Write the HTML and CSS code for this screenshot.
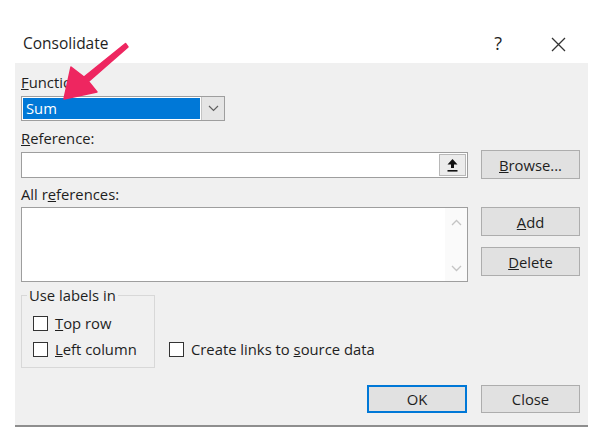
FILE: index.html
```html
<!DOCTYPE html>
<html lang="en">
<head>
  <meta charset="UTF-8" />
  <title>Consolidate</title>
  <link rel="stylesheet" href="styles.css">
</head>
<body>
  <div class="window">
    <div class="titlebar">
      <span class="title">Consolidate</span>
      <span class="help">?</span>
      <span class="close">
        <svg width="15" height="15" viewBox="0 0 15 15"><path d="M1 1 L14 14 M14 1 L1 14" stroke="#333" stroke-width="1.3" fill="none"/></svg>
      </span>
    </div>

    <div class="panel">
      <label class="field-label"><u>F</u>unction:</label>
      <div class="combo">
        <div class="combo-value"><span class="selected">Sum</span></div>
        <div class="combo-btn">
          <svg width="11" height="7" viewBox="0 0 11 7"><path d="M1 1 L5.5 5.5 L10 1" stroke="#606060" stroke-width="1.2" fill="none"/></svg>
        </div>
      </div>

      <label class="field-label ref-label"><u>R</u>eference:</label>
      <div class="row">
        <div class="textbox ref-box">
          <span class="ref-btn">
            <svg width="11" height="13" viewBox="0 0 11 13"><path d="M5.5 0 L0.5 5.5 L4 5.5 L4 9 L7 9 L7 5.5 L10.5 5.5 Z" fill="#111"/><rect x="0.5" y="11" width="10" height="1.6" fill="#111"/></svg>
          </span>
        </div>
        <button class="btn"><u>B</u>rowse...</button>
      </div>

      <label class="field-label refs-label">All r<u>e</u>ferences:</label>
      <div class="row list-row">
        <div class="textbox list-box">
          <div class="scroll">
            <svg width="11" height="7" viewBox="0 0 11 7"><path d="M1 6 L5.5 1.5 L10 6" stroke="#c4c4c4" stroke-width="1.3" fill="none"/></svg>
            <svg width="11" height="7" viewBox="0 0 11 7"><path d="M1 1 L5.5 5.5 L10 1" stroke="#c4c4c4" stroke-width="1.3" fill="none"/></svg>
          </div>
        </div>
        <div class="btn-col">
          <button class="btn"><u>A</u>dd</button>
          <button class="btn"><u>D</u>elete</button>
        </div>
      </div>

      <div class="options">
        <fieldset class="group">
          <legend>Use labels in</legend>
          <label class="check"><span class="box"></span><span><u>T</u>op row</span></label>
          <label class="check"><span class="box"></span><span><u>L</u>eft column</span></label>
        </fieldset>
        <label class="check links"><span class="box"></span><span>Create links to <u>s</u>ource data</span></label>
      </div>

      <div class="actions">
        <button class="btn btn-default">OK</button>
        <button class="btn btn-close">Close</button>
      </div>
    </div>

    <!-- annotation arrow drawn over the dialog -->
    <svg class="arrow" width="140" height="110" viewBox="0 0 140 110">
      <path d="M64 99 L97 92 L88.5 81.5 L128 47 L125.5 43.5 L84 77 L71 67 Z" fill="#ee2660" stroke="#ee2660" stroke-width="1.5" stroke-linejoin="round"/>
    </svg>
  </div>
</body>
</html>
```

FILE: styles.css
```css
:root {
  --panel: #f0f0f0;
  --text: #1e1e1e;
  --edge: #9e9e9e;
  --btn: #e1e1e1;
  --btn-border: #adadad;
  --accent: #0078d7;
}

body {
  margin: 0;
  background: #ffffff;
  font-family: "Open Sans", "Noto Sans", sans-serif;
  font-size: 14.8px;
  color: var(--text);
}

.window {
  position: relative;
  width: 616px;
  height: 439px;
  overflow: hidden;
}

/* title bar */
.titlebar {
  display: flex;
  align-items: flex-start;
  height: 63px;
  box-sizing: border-box;
  padding: 33px 50px 0 23px;
}

.title {
  flex: 1;
  font-size: 15.5px;
  line-height: 20px;
}

.help {
  font-size: 18px;
  line-height: 20px;
  margin-right: 49px;
}

.close {
  padding-top: 3px;
}

/* dialog body */
.panel {
  margin-left: 15px;
  width: 573px;
  box-sizing: border-box;
  padding: 10px 8px 12px 6px;
  background: var(--panel);
  border-bottom: 2px solid #8e8e8e;
}

.field-label {
  display: block;
  line-height: 18px;
  height: 18px;
}

.combo {
  display: flex;
  margin-top: 5px;
  width: 204px;
  height: 25px;
  box-sizing: border-box;
  border: 1px solid var(--edge);
  background: #fff;
}

.combo-value {
  width: 179px;
  padding: 1px;
  box-sizing: border-box;
}

.selected {
  display: block;
  height: 100%;
  background: var(--accent);
  color: #fff;
  padding-left: 3px;
  line-height: 21px;
}

.combo-btn {
  flex: 1;
  display: flex;
  align-items: center;
  justify-content: center;
  background: #e5e5e5;
  border-left: 1px solid #c4c4c4;
}

.ref-label {
  margin-top: 8px;
}

.refs-label {
  margin-top: 6px;
}

.row {
  display: flex;
  gap: 13px;
  margin-top: 3px;
}

.textbox {
  width: 447px;
  box-sizing: border-box;
  border: 1px solid var(--edge);
  background: #fff;
  display: flex;
  justify-content: flex-end;
}

.ref-box {
  height: 26px;
  margin-top: 2px;
}

.ref-btn {
  width: 27px;
  margin: 1px;
  box-sizing: border-box;
  border: 1px solid #b8b8b8;
  background: #ececec;
  display: flex;
  align-items: center;
  justify-content: center;
}

.list-row {
  margin-top: 4px;
}

.list-box {
  height: 75px;
}

.scroll {
  width: 22px;
  background: #fafafa;
  display: flex;
  flex-direction: column;
  justify-content: space-between;
  align-items: center;
  padding: 11px 0 9px;
}

.btn-col {
  display: flex;
  flex-direction: column;
  gap: 11px;
}

.btn {
  width: 99px;
  height: 29px;
  box-sizing: border-box;
  background: var(--btn);
  border: 1px solid var(--btn-border);
  font-family: inherit;
  font-size: inherit;
  color: var(--text);
  padding: 0;
}

/* labels group and checkboxes */
.options {
  display: flex;
  margin-top: 5px;
}

.group {
  width: 134px;
  box-sizing: border-box;
  margin: 0;
  padding: 8px 0 6px 11px;
  border: 1px solid #d8d8d8;
}

.group legend {
  padding: 0 2px;
  margin-left: -6px;
  line-height: 16px;
}

.check {
  display: flex;
  align-items: center;
  gap: 7px;
  height: 24px;
  white-space: nowrap;
}

.group .check + .check {
  margin-top: 2px;
}

.box {
  width: 15px;
  height: 15px;
  flex: none;
  box-sizing: border-box;
  border: 1px solid #333;
  background: #fff;
}

.links {
  align-self: flex-end;
  margin: 0 0 7px 14px;
}

.actions {
  display: flex;
  justify-content: flex-end;
  gap: 14px;
  margin-top: 17px;
}

.actions .btn {
  height: 28px;
}

.btn-default {
  width: 100px;
  border: 2px solid var(--accent);
}

.arrow {
  position: absolute;
  left: 0;
  top: 0;
}
```
